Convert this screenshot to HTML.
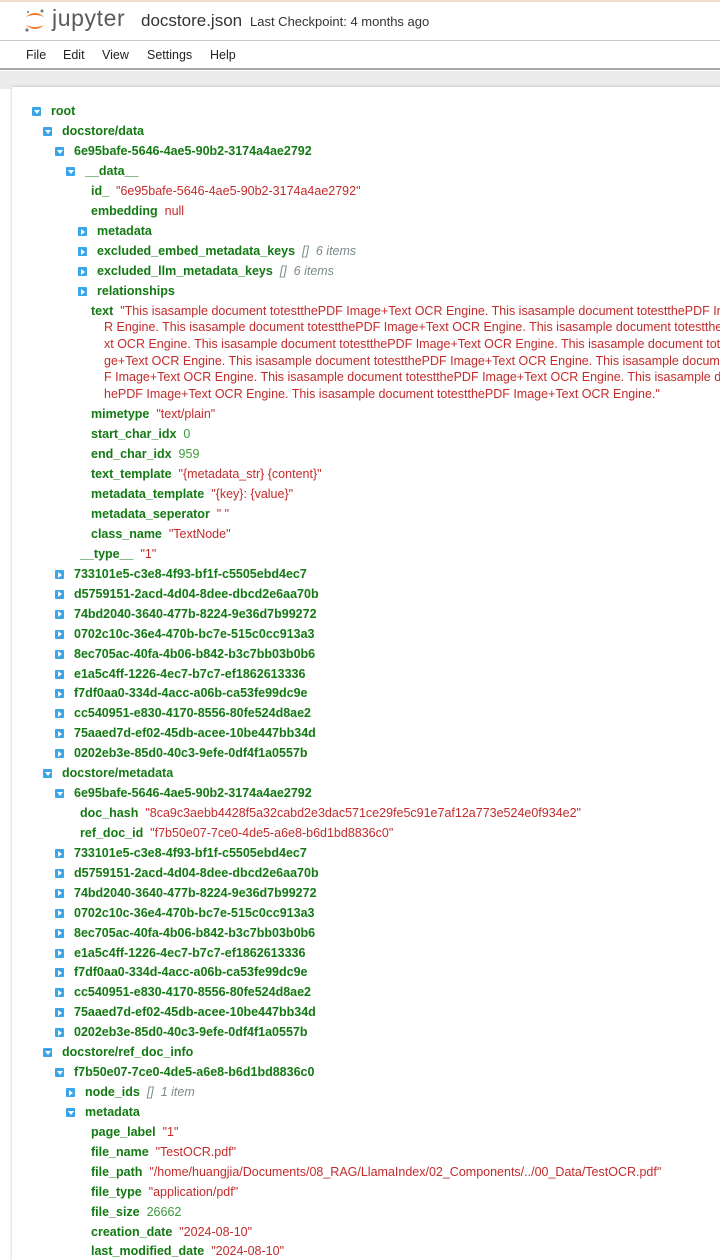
<!DOCTYPE html>
<html><head><meta charset="utf-8"><style>
*{margin:0;padding:0;box-sizing:border-box}
body{width:720px;height:1260px;overflow:hidden;background:#fff;font-family:"Liberation Sans",sans-serif}
#w{position:relative;width:720px;height:1260px;overflow:hidden}
.top{position:absolute;left:0;top:0;width:720px;height:41px;border-top:2px solid #f3dcc8;border-bottom:1px solid #c8c8c8;background:#fff}
.menu{position:absolute;left:0;top:41px;width:720px;height:29px;background:#fff;border-bottom:2px solid #a8a8a8}
.menu span{position:absolute;top:7px;font-size:12.5px;color:#222}
.band{position:absolute;left:0;top:71px;width:720px;height:18px;background:#ececec}
.panel{position:absolute;left:12px;top:87px;width:708px;height:1173px;background:#fff;box-shadow:0 0 3px rgba(0,0,0,.25)}
.r{position:absolute;height:18px;line-height:18px;font-size:12.5px;white-space:nowrap}
.k{color:#137a13;font-weight:bold}
.s{color:#c42b2b}
.n{color:#3c9a3c}
.g{color:#7a8a8a;font-style:italic}
.i{position:absolute;width:9px;height:9px;background:#3aa5e8;border-radius:1px}
.i.d::after{content:"";position:absolute;left:1.5px;top:3px;border-left:3px solid transparent;border-right:3px solid transparent;border-top:4px solid #fff}
.i.c::after{content:"";position:absolute;left:3px;top:1.5px;border-top:3px solid transparent;border-bottom:3px solid transparent;border-left:4px solid #fff}
.tx{position:absolute;font-size:12.5px;line-height:16.8px;color:#c42b2b;white-space:nowrap}
</style></head><body><div id="w">
<div class="top">
<svg style="position:absolute;left:24px;top:6px" width="22" height="26" viewBox="0 0 22 26">
<path d="M2 9 Q11 1 20 9 Q11 5 2 9Z" fill="#f37726"/>
<path d="M2 17 Q11 25 20 17 Q11 21 2 17Z" fill="#f37726"/>
<circle cx="18" cy="3" r="1.5" fill="#767677"/><circle cx="3" cy="22" r="1.6" fill="#767677"/><circle cx="4" cy="4" r="1" fill="#767677"/>
</svg>
<span style="position:absolute;left:52px;top:3px;font-size:23px;color:#5a5a5a;letter-spacing:0.6px">jupyter</span>
<span style="position:absolute;left:141px;top:9px;font-size:17px;color:#333">docstore.json</span>
<span style="position:absolute;left:250px;top:12px;font-size:13px;color:#333">Last Checkpoint: 4 months ago</span>
</div>
<div class="menu"><span style="left:26px">File</span><span style="left:63px">Edit</span><span style="left:102px">View</span><span style="left:147px">Settings</span><span style="left:210px">Help</span></div>
<div class="band"></div>
<div class="panel"></div>
<div id="t"></div>
<div class="tx" style="left:104px;top:319px">R Engine. This isasample document totestthePDF Image+Text OCR Engine. This isasample document totestthePDF Image+Text OCR Engine. This isasample document totestthePDF<br>xt OCR Engine. This isasample document totestthePDF Image+Text OCR Engine. This isasample document totestthePDF Image+Text OCR Engine. This isasample<br>ge+Text OCR Engine. This isasample document totestthePDF Image+Text OCR Engine. This isasample document totestthePDF Image+Text OCR Engine. This<br>F Image+Text OCR Engine. This isasample document totestthePDF Image+Text OCR Engine. This isasample document totestthePDF Image+Text OCR Engine.<br>hePDF Image+Text OCR Engine. This isasample document totestthePDF Image+Text OCR Engine."</div>
</div>
<script>
var ids=["733101e5-c3e8-4f93-bf1f-c5505ebd4ec7","d5759151-2acd-4d04-8dee-dbcd2e6aa70b","74bd2040-3640-477b-8224-9e36d7b99272","0702c10c-36e4-470b-bc7e-515c0cc913a3","8ec705ac-40fa-4b06-b842-b3c7bb03b0b6","e1a5c4ff-1226-4ec7-b7c7-ef1862613336","f7df0aa0-334d-4acc-a06b-ca53fe99dc9e","cc540951-e830-4170-8556-80fe524d8ae2","75aaed7d-ef02-45db-acee-10be447bb34d","0202eb3e-85d0-40c3-9efe-0df4f1a0557b"];
var R=[[111,32,"root","","d"],[131,43,"docstore/data","","d"],[151,55,"6e95bafe-5646-4ae5-90b2-3174a4ae2792","","d"],[171,66,"__data__","","d"],
[191,-91,"id_",'<span class="s">"6e95bafe-5646-4ae5-90b2-3174a4ae2792"</span>'],
[211,-91,"embedding",'<span class="s">null</span>'],
[231,78,"metadata","","c"],[251,78,"excluded_embed_metadata_keys",'<span class="g">[]&nbsp; 6 items</span>',"c"],[271,78,"excluded_llm_metadata_keys",'<span class="g">[]&nbsp; 6 items</span>',"c"],[291,78,"relationships","","c"],
[311,-91,"text",'<span class="s">"This isasample document totestthePDF Image+Text OCR Engine. This isasample document totestthePDF Image+Text OCR Engine.</span>'],
[414,-91,"mimetype",'<span class="s">"text/plain"</span>'],[434,-91,"start_char_idx",'<span class="n">0</span>'],[454,-91,"end_char_idx",'<span class="n">959</span>'],
[474,-91,"text_template",'<span class="s">"{metadata_str} {content}"</span>'],[494,-91,"metadata_template",'<span class="s">"{key}: {value}"</span>'],[514,-91,"metadata_seperator",'<span class="s">" "</span>'],[534,-91,"class_name",'<span class="s">"TextNode"</span>'],[554,-80,"__type__",'<span class="s">"1"</span>']];
ids.forEach(function(s,j){R.push([574+j*19.9,55,s,"","c"]);});
R.push([773,43,"docstore/metadata","","d"],[793,55,"6e95bafe-5646-4ae5-90b2-3174a4ae2792","","d"],[813,-80,"doc_hash",'<span class="s">"8ca9c3aebb4428f5a32cabd2e3dac571ce29fe5c91e7af12a773e524e0f934e2"</span>'],[833,-80,"ref_doc_id",'<span class="s">"f7b50e07-7ce0-4de5-a6e8-b6d1bd8836c0"</span>']);
ids.forEach(function(s,j){R.push([853+j*19.9,55,s,"","c"]);});
R.push([1052,43,"docstore/ref_doc_info","","d"],[1072,55,"f7b50e07-7ce0-4de5-a6e8-b6d1bd8836c0","","d"],[1092,66,"node_ids",'<span class="g">[]&nbsp; 1 item</span>',"c"],[1112,66,"metadata","","d"],
[1132,-91,"page_label",'<span class="s">"1"</span>'],[1152,-91,"file_name",'<span class="s">"TestOCR.pdf"</span>'],[1172,-91,"file_path",'<span class="s">"/home/huangjia/Documents/08_RAG/LlamaIndex/02_Components/../00_Data/TestOCR.pdf"</span>'],[1192,-91,"file_type",'<span class="s">"application/pdf"</span>'],[1212,-91,"file_size",'<span class="n">26662</span>'],[1232,-91,"creation_date",'<span class="s">"2024-08-10"</span>'],[1251,-91,"last_modified_date",'<span class="s">"2024-08-10"</span>']);
var h="";
R.forEach(function(r){var y=r[0],x=r[1],tx;
if(x>0){h+='<div class="i '+r[4]+'" style="left:'+x+'px;top:'+(y-4)+'px"></div>';tx=x+19;}else tx=-x;
h+='<div class="r" style="left:'+tx+'px;top:'+(y-9)+'px"><span class="k">'+r[2]+'</span>'+(r[3]?'&nbsp; '+r[3]:'')+'</div>';});
document.getElementById("t").innerHTML=h;
</script>
</body></html>
